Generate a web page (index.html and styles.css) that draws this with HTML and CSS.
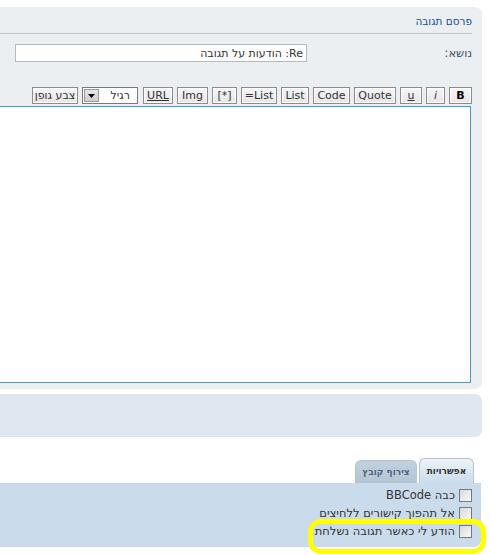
FILE: index.html
```html
<!DOCTYPE html>
<html lang="he" dir="rtl">
<head>
<meta charset="utf-8">
<link rel="stylesheet" href="styles.css">
</head>
<body>
<div class="panel">
  <h3 class="heading">פרסם תגובה</h3>
  <div class="subject-row">
    <label class="subject-label">נושא:</label>
    <input class="subject-input" type="text" value="Re: הודעות על תגובה">
  </div>
  <div class="toolbar">
    <span class="btn bold w23">B</span>
    <span class="btn italic w19">i</span>
    <span class="btn under w22">u</span>
    <span class="btn w42">Quote</span>
    <span class="btn w37">Code</span>
    <span class="btn w28">List</span>
    <span class="btn w36">=List</span>
    <span class="btn w25">[*]</span>
    <span class="btn w31">Img</span>
    <span class="btn url w30">URL</span>
    <span class="select"><span class="select-text">רגיל</span><span class="select-arrow"><svg width="7" height="4" viewBox="0 0 7 4"><path d="M0 0h7L3.5 4z" fill="#000"/></svg></span></span>
    <span class="btn w46">צבע גופן</span>
  </div>
  <div class="textarea"></div>
</div>
<div class="panel2"></div>
<div class="tabs">
  <span class="tab active">אפשרויות</span>
  <span class="tab">צירוף קובץ</span>
</div>
<div class="options">
  <div class="opt"><span class="cb"></span><span>כבה BBCode</span></div>
  <div class="opt"><span class="cb"></span><span>אל תהפוך קישורים ללחיצים</span></div>
  <div class="opt"><span class="cb"></span><span>הודע לי כאשר תגובה נשלחת</span></div>
  <div class="highlight"></div>
</div>
</body>
</html>
```
FILE: styles.css
```css
html, body {
  margin: 0;
  padding: 0;
  background: #fff;
  overflow: hidden;
}
body {
  font-family: "DejaVu Sans", Verdana, sans-serif;
  font-size: 11px;
  color: #333;
  width: 491px;
  height: 555px;
  direction: rtl;
}
.panel {
  margin: 7px 9px 0 -30px;
  background: #eceff2;
  border-radius: 7px;
  padding: 7px 10px 6px 0;
}
.heading {
  margin: 0;
  font-family: "DejaVu Sans", sans-serif;
  font-size: 10.5px;
  font-weight: normal;
  color: #115098;
  line-height: 14px;
  padding-bottom: 5px;
  border-bottom: 1px solid #c4c4c4;
}
.subject-row {
  display: flex;
  align-items: center;
  margin-top: 10px;
  height: 18px;
}
.subject-label {
  width: 165px;
  color: #425067;
  flex: none;
  font-size: 11.5px;
}
.subject-input {
  width: 292px;
  height: 18px;
  box-sizing: border-box;
  border: 1px solid #b4bac0;
  background: #fff;
  font-family: "DejaVu Sans", sans-serif;
  font-size: 11px;
  color: #333;
  padding: 0 3px;
  direction: rtl;
  margin: 0;
  outline: none;
}
.toolbar {
  display: flex;
  gap: 4px;
  margin-top: 25px;
  height: 17px;
  align-items: stretch;
}
.btn {
  border: 1px solid #8c8c8c;
  background: linear-gradient(#f6f6f6, #e6e6e6);
  color: #333;
  padding: 0;
  line-height: 15px;
  font-size: 11px;
  direction: ltr;
  text-align: center;
  box-sizing: border-box;
  box-shadow: inset 0 0 0 1px #fff;
  white-space: nowrap;
}
.w19 { width: 19px; }
.w22 { width: 22px; }
.w23 { width: 23px; }
.w25 { width: 25px; }
.w28 { width: 28px; }
.w30 { width: 30px; }
.w31 { width: 31px; }
.w36 { width: 36px; }
.w37 { width: 37px; }
.w42 { width: 42px; }
.w46 { width: 46px; direction: rtl; }
.bold { font-weight: bold; color: #000; }
.italic { font-style: italic; }
.under { text-decoration: underline; }
.url { text-decoration: underline; }
.select {
  display: flex;
  border: 1px solid #7a7a7a;
  background: #fff;
  width: 56px;
  padding: 1px;
  box-sizing: border-box;
  margin-right: 1px;
}
.select-text {
  flex: 1;
  line-height: 13px;
  padding-right: 6px;
}
.select-arrow {
  width: 15px;
  background: linear-gradient(#e4e4e4, #cfcfcf);
  border: 1px solid #9a9a9a;
  box-sizing: border-box;
  display: flex;
  align-items: center;
  justify-content: center;
}
.textarea {
  margin-top: 2px;
  height: 275px;
  border: 1px solid #3c9ed0;
  border-left: none;
  background: #fff;
  margin-right: 1px;
}
.panel2 {
  margin: 5px 9px 0 -30px;
  height: 43px;
  background: #dfe8f0;
  border-radius: 7px;
}
.tabs {
  display: flex;
  align-items: flex-end;
  gap: 2px;
  margin-top: 20px;
  padding-right: 17px;
  height: 26px;
}
.tab {
  font-size: 9px;
  font-weight: bold;
  width: 62px;
  text-align: center;
  box-sizing: border-box;
  border-radius: 6px 6px 0 0;
  line-height: 22px;
  height: 23px;
  background: linear-gradient(#c3d1de, #b3c5d4);
  color: #536482;
  border: 1px solid #b4c3d1;
  border-bottom: none;
}
.tab.active {
  height: 25px;
  line-height: 25px;
  width: 55px;
  background: linear-gradient(#eef3f8, #cadceb);
  color: #333;
}
.options {
  position: relative;
  margin: 0 10px 0 -30px;
  background: #cadceb;
  border-radius: 0 0 7px 7px;
  padding: 3px 9px 6px 0;
  height: 55px;
}
.opt {
  display: flex;
  align-items: center;
  gap: 4px;
  height: 18px;
  color: #333;
  font-size: 11.5px;
}
.cb {
  width: 11px;
  height: 11px;
  border: 1px solid #777;
  background: linear-gradient(135deg, #d8d8d8, #fafafa);
  flex: none;
}
.highlight {
  position: absolute;
  right: -5px;
  top: 36px;
  width: 168px;
  height: 25px;
  border: 5px solid #ffff00;
  border-radius: 13px;
}
```
